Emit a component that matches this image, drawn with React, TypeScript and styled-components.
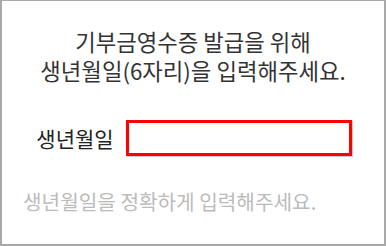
import styled, { createGlobalStyle } from 'styled-components';

const GlobalStyle = createGlobalStyle`
    html, body {
        margin: 0;
        padding: 0;
        background: #ffffff;
    }
    * {
        box-sizing: border-box;
    }
`;

const Frame = styled.div`
    width: 386px;
    height: 246px;
    border: 2px solid #a9a9a9;
    border-top-width: 1px;
    background: #ffffff;
    font-family: "Noto Sans CJK KR", "Noto Sans", sans-serif;
    display: flex;
    flex-direction: column;
    padding: 26px 0 0 0;
`;

const Title = styled.p`
    margin: 0;
    text-align: center;
    font-size: 22.3px;
    line-height: 29px;
    color: #333333;
`;

const Row = styled.div`
    display: flex;
    align-items: center;
    justify-content: center;
    gap: 12px;
    margin-top: 35px;
    padding-left: 2px;
`;

const Label = styled.label`
    font-size: 21px;
    line-height: 29px;
    color: #222222;
`;

const Input = styled.input`
    width: 226px;
    height: 36px;
    border: 3.5px solid #ff0000;
    box-shadow: 1px 1px 1px #c8c8c8;
    outline: none;
    padding: 0 8px;
    font-size: 18px;
    background: #ffffff;
`;

const Hint = styled.p`
    margin: 33px 0 0 0;
    padding-left: 21px;
    font-size: 20.2px;
    line-height: 26px;
    color: #bbbbbb;
`;

export default function App() {
    return (
        <>
            <GlobalStyle />
            <Frame>
                <Title>
                    기부금영수증 발급을 위해
                    <br />
                    생년월일(6자리)을 입력해주세요.
                </Title>
                <Row>
                    <Label htmlFor="birth">생년월일</Label>
                    <Input id="birth" type="text" />
                </Row>
                <Hint>생년월일을 정확하게 입력해주세요.</Hint>
            </Frame>
        </>
    );
}
